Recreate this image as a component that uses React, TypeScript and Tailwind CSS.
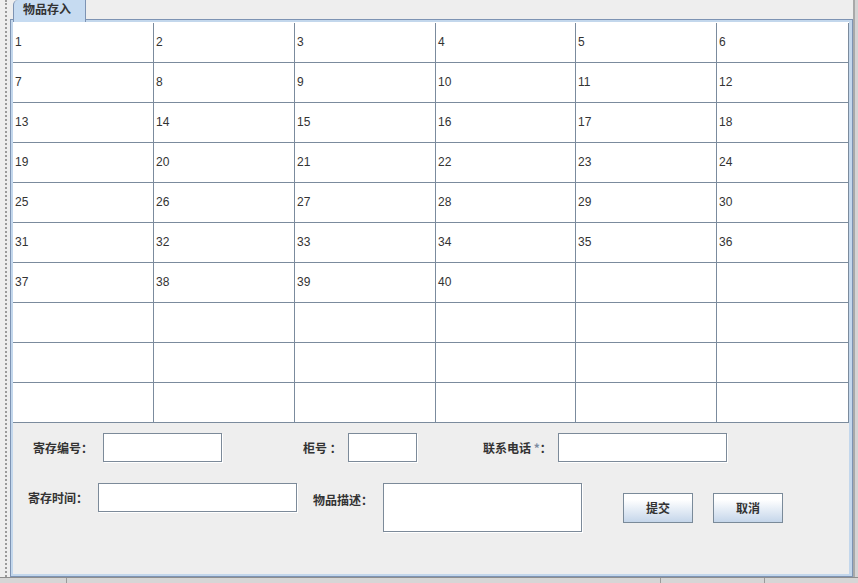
import React from 'react';

const colWidths = ['w-[141px]', 'w-[141px]', 'w-[141px]', 'w-[140px]', 'w-[141px]', 'w-[132px]'];

const cells: string[] = Array.from({ length: 60 }, (_, i) => (i < 40 ? String(i + 1) : ''));

const Input = ({ className }: { className: string }) => (
  <div className={`bg-white border border-[#7c8a99] shadow-[1px_1px_0_#ffffff] ${className}`} />
);

const Btn = ({ label, className }: { label: string; className?: string }) => (
  <button
    className={`w-[70px] h-[30px] border border-[#7a8a99] bg-gradient-to-b from-white from-20% to-[#c5d6ea] text-[12px] font-bold text-[#333] ${className ?? ''}`}
  >
    {label}
  </button>
);

export default function App() {
  return (
    <div className="w-[858px] h-[583px] bg-[#eeeeee] overflow-hidden flex flex-col text-[#333] font-['Liberation_Sans','Noto_Sans_CJK_SC',sans-serif]">
      <div className="flex h-[577px]">
        {/* left dotted gutter */}
        <div className="w-[10px] flex">
          <div className="h-full border-l-2 border-dotted border-[#9a9a9a] ml-[5px]" />
        </div>

        {/* tabbed panel */}
        <div className="w-[843px] flex flex-col">
          <div className="h-[19px] flex pl-[3px]">
            <div className="relative z-10 -mb-[3px] w-[73px] h-[22px] bg-[#c6dbf1] border-l border-r border-[#7d93b3] rounded-tl-[5px] flex items-start pl-[9px] pt-[2px] text-[12px] font-bold font-['Noto_Sans_CJK_SC',sans-serif] leading-[14px]">
              物品存入
            </div>
          </div>
          <div className="flex-1 flex flex-col border border-[#7d93b3] bg-[#c3d7ec] pl-[2px] pr-[3px] pt-[2px] pb-[2px]">
            {/* grid */}
            <div className="bg-white pt-px">
              <div className="grid grid-cols-[141px_141px_141px_140px_141px_132px]">
                {cells.map((c, i) => (
                  <div
                    key={i}
                    className={`${colWidths[i % 6]} h-[40px] border-r border-b border-[#7b8b9d] flex items-center pl-[2px] pb-[2px] text-[12px]`}
                  >
                    {c}
                  </div>
                ))}
              </div>
            </div>

            {/* form */}
            <div className="flex-1 bg-[#eeeeee] flex flex-col text-[12px] font-bold font-['Noto_Sans_CJK_SC',sans-serif]">
              <div className="flex items-center mt-[10px] pl-[20px]">
                <span className="w-[70px]">寄存编号：</span>
                <Input className="w-[119px] h-[29px]" />
                <span className="ml-[81px] w-[45px]">柜号 ：</span>
                <Input className="w-[69px] h-[29px]" />
                <span className="ml-[66px] w-[75px]">
                  联系电话 <span className="text-[#7b8aa0]">*</span>：
                </span>
                <Input className="w-[169px] h-[29px]" />
              </div>
              <div className="flex items-start mt-[21px] pl-[15px]">
                <span className="w-[70px] h-[29px] flex items-center">寄存时间：</span>
                <Input className="w-[199px] h-[29px]" />
                <span className="ml-[16px] w-[70px] mt-[8px]">物品描述：</span>
                <Input className="w-[199px] h-[49px]" />
                <Btn label="提交" className="ml-[41px] mt-[10px]" />
                <Btn label="取消" className="ml-[20px] mt-[10px]" />
              </div>
            </div>
          </div>
        </div>

        {/* right edge */}
        <div className="flex-1 bg-[#d4d4d4] border-l-2 border-[#a9a9a9]" />
      </div>

      {/* bottom strip */}
      <div className="flex-1 bg-[#d6d6d6] border-t border-[#8e8e8e] flex">
        <div className="w-[67px] border-r border-[#9a9a9a]" />
        <div className="w-[594px] border-r border-[#9a9a9a]" />
        <div className="w-[104px] border-r border-[#9a9a9a]" />
      </div>
    </div>
  );
}
